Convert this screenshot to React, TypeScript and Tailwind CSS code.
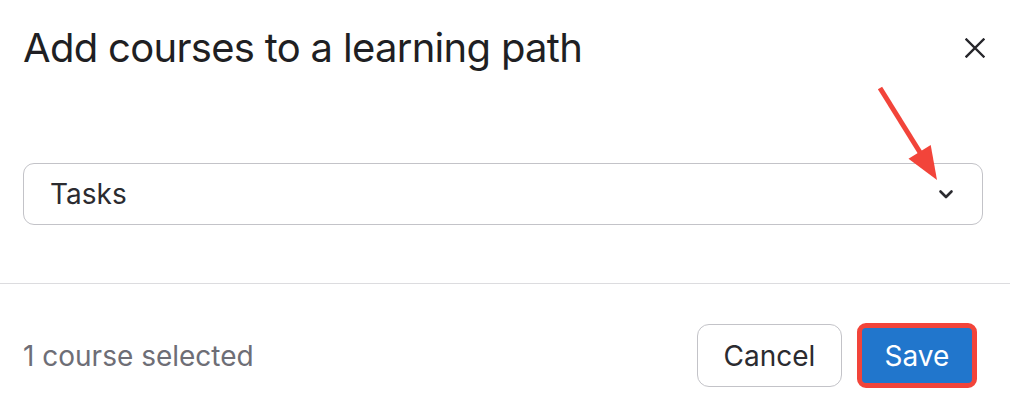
import React from 'react';

const App: React.FC = () => {
  return (
    <div className="relative w-[1010px] h-[416px] bg-white overflow-hidden" style={{ fontFamily: 'Inter, "Noto Sans", sans-serif' }}>
      <header className="h-[96px] flex items-center justify-between pl-[23px] pr-[25px]">
        <h1 className="text-[40px] leading-none text-[#1f1f23] tracking-[-0.7px]">Add courses to a learning path</h1>
        <button className="w-[20px] h-[20px] text-[#26262b]" aria-label="Close">
          <svg viewBox="0 0 20 20" className="w-[20px] h-[20px]" fill="none" stroke="currentColor" strokeWidth={2.4} strokeLinecap="square">
            <path d="M1.5 1.5L18.5 18.5M18.5 1.5L1.5 18.5" />
          </svg>
        </button>
      </header>

      <div className="pt-[67px] pb-[58px] pl-[23px] pr-[27px]">
        <div className="h-[62px] flex items-center justify-between border border-[#c3c3c8] rounded-[11px] pl-[26px] pr-[28px]">
          <span className="text-[28px] text-[#2b2b30]">Tasks</span>
          <svg viewBox="0 0 16 11" className="w-[16px] h-[11px] text-[#2b2b30]" fill="none" stroke="currentColor" strokeWidth={2.6} strokeLinecap="round" strokeLinejoin="round">
            <path d="M2.5 2.5L8 8L13.5 2.5" />
          </svg>
        </div>
      </div>

      <footer className="border-t border-[#dcdcdf] flex items-center justify-between pt-[39px] pl-[23px] pr-[33px]">
        <span className="text-[28px] text-[#6e6e76]">1 course selected</span>
        <div className="flex items-center gap-[15px]">
          <button className="w-[145px] h-[63px] border-[1.5px] border-[#c3c3c8] rounded-[12px] text-[28px] text-[#2b2b30]">Cancel</button>
          <button className="w-[120px] h-[65px] border-[5px] border-[#f2443a] rounded-[9px] bg-[#2176cc] text-[28px] text-white">Save</button>
        </div>
      </footer>

      <svg className="absolute left-0 top-0 w-[1010px] h-[416px] pointer-events-none" viewBox="0 0 1010 416">
        <line x1="880" y1="88" x2="921" y2="154" stroke="#f2443a" strokeWidth={5} />
        <polygon points="937,180 930.7,145 908.5,158.8" fill="#f2443a" />
      </svg>
    </div>
  );
};

export default App;
